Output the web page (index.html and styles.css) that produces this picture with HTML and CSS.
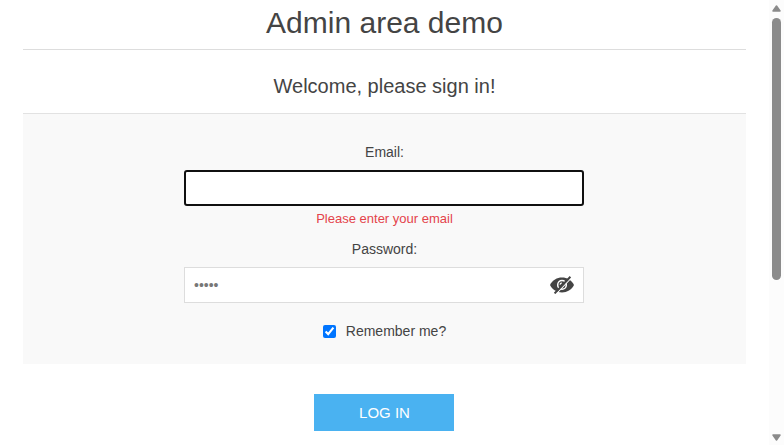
FILE: index.html
```html
<!DOCTYPE html>
<html lang="en">
<head>
<meta charset="utf-8">
<title>Admin area demo</title>
<link rel="stylesheet" href="styles.css">
</head>
<body>
<main class="page">
  <h1 class="page-title">Admin area demo</h1>
  <form class="login">
    <h2 class="login-title">Welcome, please sign in!</h2>
    <div class="fieldset">
      <label class="label" for="email">Email:</label>
      <input class="field field-focused" id="email" type="text">
      <span class="error">Please enter your email</span>
      <label class="label label-password" for="password">Password:</label>
      <div class="password">
        <input class="field" id="password" type="text" placeholder="•••••">
        <svg class="eye" viewBox="0 0 24 18">
          <path class="eye-shape" d="M0 9C2.4 4 7 1.4 12 1.4S21.6 4 24 9C21.6 13.8 17 16.4 12 16.4S2.4 13.8 0 9Z"/>
          <circle class="eye-ring" cx="12" cy="8.9" r="4.3"/>
          <path class="eye-glint" d="M10 8.6Q10.2 7 11.8 6.8"/>
          <path class="slash-gap" d="M6.2 17.8L21.4 1.8"/>
          <path class="slash" d="M4.6 17.4L20.4 .8"/>
        </svg>
      </div>
      <label class="remember"><input class="check" type="checkbox" checked>Remember me?</label>
    </div>
    <button class="login-button" type="button">LOG IN</button>
  </form>
</main>
<div class="scrollbar">
  <svg class="arrow" viewBox="0 0 9 7"><path d="M4.5 1L8 6H1Z"/></svg>
  <div class="thumb"></div>
  <svg class="arrow arrow-down" viewBox="0 0 9 7"><path d="M4.5 6L8 1H1Z"/></svg>
</div>
</body>
</html>
```
FILE: styles.css
```css
* { box-sizing: border-box; }

body {
  margin: 0;
  height: 445px;
  overflow: hidden;
  display: flex;
  background: #fff;
  color: #444;
  font: 14px "Liberation Sans", Arial, sans-serif;
}

.page {
  flex: 1;
  padding: 0 23px;
  text-align: center;
}

.page-title {
  height: 50px;
  margin: 0;
  border-bottom: 1px solid #ddd;
  font-size: 30px;
  font-weight: 400;
  line-height: 45px;
}

.login-title {
  height: 63px;
  margin: 0;
  padding-top: 24px;
  font-size: 20px;
  font-weight: 400;
  line-height: 24px;
}

.fieldset {
  display: flex;
  flex-direction: column;
  align-items: center;
  height: 251px;
  padding-top: 28px;
  border-top: 1px solid #e2e2e2;
  background: #f9f9f9;
}

.label {
  height: 28px;
  line-height: 20px;
}

.field {
  display: block;
  width: 400px;
  height: 36px;
  margin: 0 1px 0 0;
  padding: 0 9px;
  border: 1px solid #ddd;
  background: #fff;
  color: #777;
  font: inherit;
  outline: none;
}

.field::placeholder { color: #777; }

.field-focused {
  border: 2px solid #101010;
  border-radius: 3px;
}

.error {
  height: 33px;
  padding-top: 5px;
  color: #e4434b;
  font-size: 13px;
  line-height: 15px;
}

.password { position: relative; }

.eye {
  position: absolute;
  right: 11px;
  top: 9px;
  width: 24px;
  height: 18px;
}

.eye-shape { fill: #444; }
.eye-ring { fill: none; stroke: #fff; stroke-width: 1.5; }
.eye-glint { fill: none; stroke: #fff; stroke-width: 1.2; }
.slash { stroke: #444; stroke-width: 2; }
.slash-gap { stroke: #fff; stroke-width: 1.2; }

.remember {
  display: flex;
  align-items: center;
  gap: 10px;
  margin-top: 18px;
  line-height: 20px;
}

.check {
  width: 13px;
  height: 13px;
  margin: 0;
}

.login-button {
  width: 140px;
  height: 37px;
  margin: 30px 1px 0 0;
  padding: 0 0 0 1px;
  border: 0;
  background: #4ab2f1;
  color: #fff;
  font: 15px "Liberation Sans", Arial, sans-serif;
}

.scrollbar {
  display: flex;
  flex-direction: column;
  align-items: center;
  width: 15px;
  padding: 5px 0 4px;
  background: #fcfcfc;
}

.arrow {
  width: 9px;
  height: 7px;
  fill: #8b8b8b;
  stroke: #8b8b8b;
  stroke-width: 1.5;
  stroke-linejoin: round;
}

.arrow-down { margin-top: auto; }

.thumb {
  width: 9px;
  height: 262px;
  margin-top: 6px;
  border-radius: 5px;
  background: #8b8b8b;
}
```
